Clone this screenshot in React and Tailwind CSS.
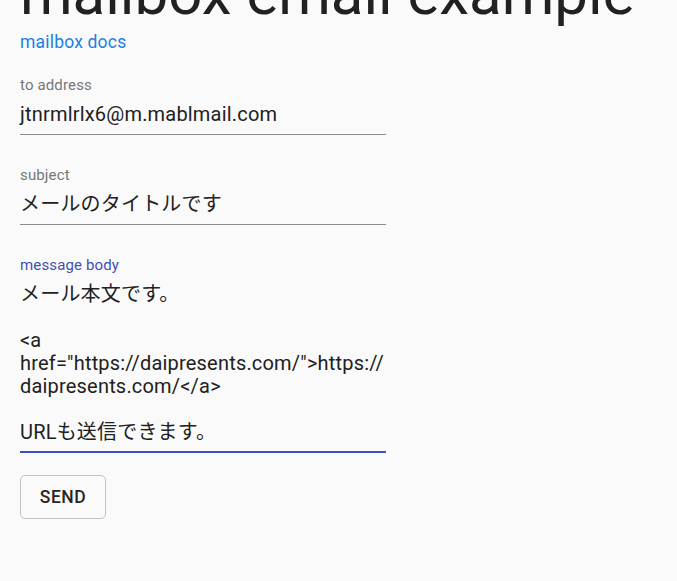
// App.jsx
const font = { fontFamily: 'Roboto, "Noto Sans CJK JP", "Liberation Sans", sans-serif' };

function Field({ label, focused, children }) {
  return (
    <div className="flex flex-col w-[366px]">
      <label
        className={`text-[15px] leading-[18px] h-[18px] tracking-[0.14px] ${
          focused ? 'text-[#3f51b5]' : 'text-[#777777]'
        }`}
      >
        {label}
      </label>
      <div
        className={`mt-[9px] text-[20px] leading-[23px] tracking-[0.19px] text-[#212121] ${
          focused ? 'pb-[7px] border-b-2 border-[#3f51b5]' : 'pb-[8px] border-b border-[#8c8c8c]'
        }`}
      >
        {children}
      </div>
    </div>
  );
}

export default function App() {
  const bodyLines = [
    'メール本文です。',
    '',
    '<a',
    'href="https://daipresents.com/">https://',
    'daipresents.com/</a>',
    '',
    'URLも送信できます。',
  ];

  return (
    <div className="min-h-screen bg-[#fafafa] overflow-hidden" style={font}>
      <div className="pl-[20px] flex flex-col items-start">
        <h1 className="mt-[-42px] text-[60px] leading-[72px] font-normal text-[#212121] whitespace-nowrap">
          mailbox email example
        </h1>
        <a href="#" className="mt-[2px] text-[17.5px] leading-[21px] tracking-[0.19px] text-[#1a80e3]">
          mailbox docs
        </a>

        <div className="mt-[23px] flex flex-col gap-[31px]">
          <Field label="to address">jtnrmlrlx6@m.mablmail.com</Field>
          <Field label="subject">メールのタイトルです</Field>
          <Field label="message body" focused>
            {bodyLines.map((line, i) => (
              <div key={i} className="h-[23px] whitespace-pre">
                {line}
              </div>
            ))}
          </Field>
        </div>

        <button className="mt-[22px] w-[86px] h-[44px] pt-[1px] rounded-[5px] border border-[#c2c2c2] text-[17.5px] font-medium tracking-[0.5px] text-[#262626] flex items-center justify-center">
          SEND
        </button>
      </div>
    </div>
  );
}
